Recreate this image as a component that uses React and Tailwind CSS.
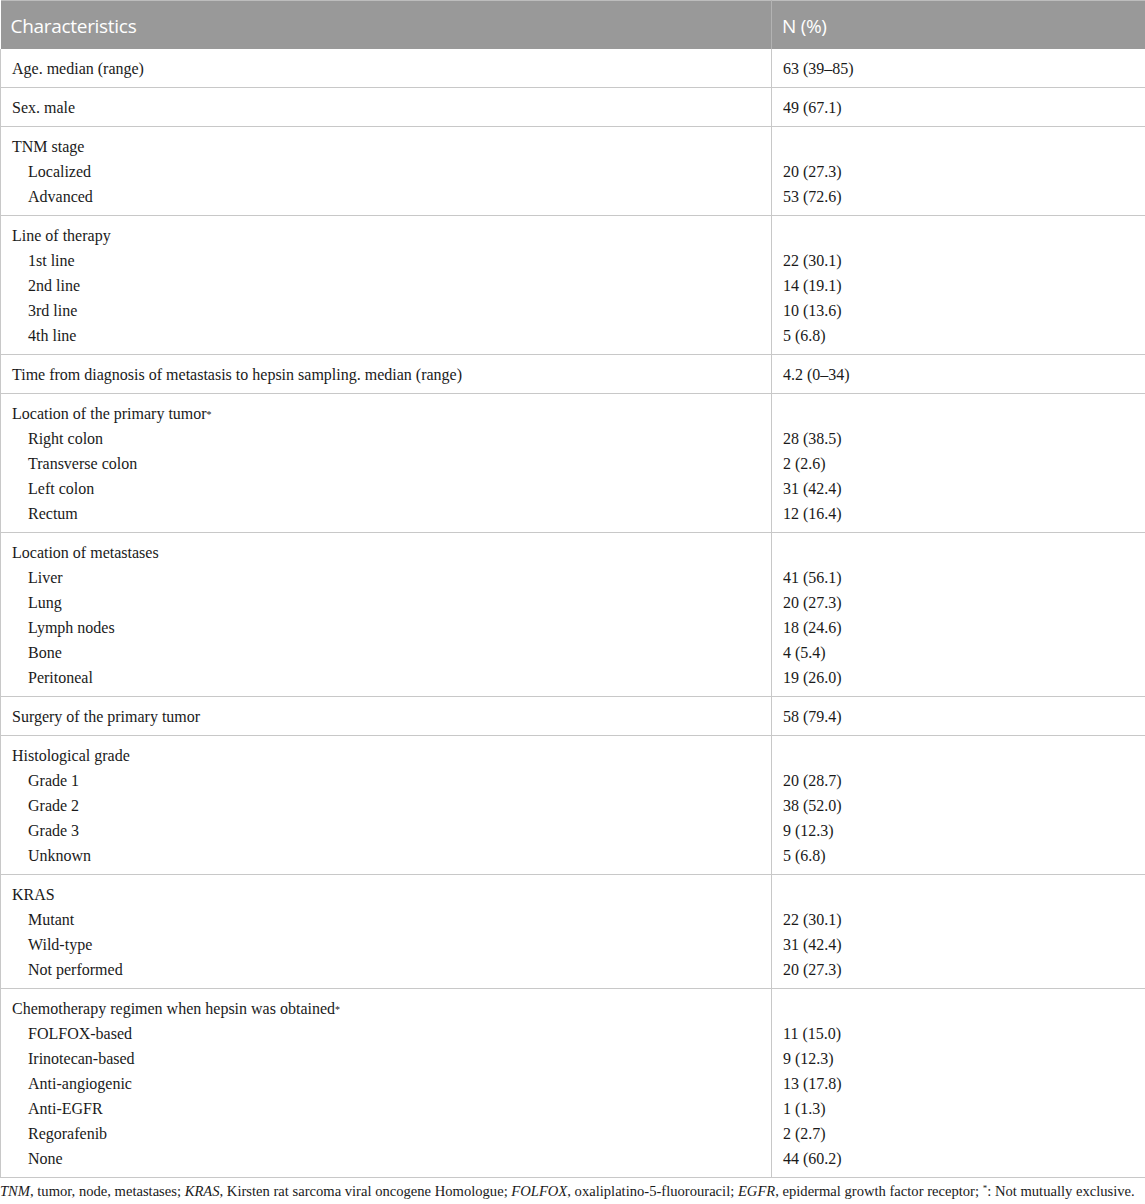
const rows = [
  { title: "Age. median (range)", value: "63 (39–85)" },
  { title: "Sex. male", value: "49 (67.1)" },
  { title: "TNM stage", items: [["Localized", "20 (27.3)"], ["Advanced", "53 (72.6)"]] },
  { title: "Line of therapy", items: [["1st line", "22 (30.1)"], ["2nd line", "14 (19.1)"], ["3rd line", "10 (13.6)"], ["4th line", "5 (6.8)"]] },
  { title: "Time from diagnosis of metastasis to hepsin sampling. median (range)", value: "4.2 (0–34)" },
  { title: "Location of the primary tumor*", items: [["Right colon", "28 (38.5)"], ["Transverse colon", "2 (2.6)"], ["Left colon", "31 (42.4)"], ["Rectum", "12 (16.4)"]] },
  { title: "Location of metastases", items: [["Liver", "41 (56.1)"], ["Lung", "20 (27.3)"], ["Lymph nodes", "18 (24.6)"], ["Bone", "4 (5.4)"], ["Peritoneal", "19 (26.0)"]] },
  { title: "Surgery of the primary tumor", value: "58 (79.4)" },
  { title: "Histological grade", items: [["Grade 1", "20 (28.7)"], ["Grade 2", "38 (52.0)"], ["Grade 3", "9 (12.3)"], ["Unknown", "5 (6.8)"]] },
  { title: "KRAS", items: [["Mutant", "22 (30.1)"], ["Wild-type", "31 (42.4)"], ["Not performed", "20 (27.3)"]] },
  { title: "Chemotherapy regimen when hepsin was obtained*", items: [["FOLFOX-based", "11 (15.0)"], ["Irinotecan-based", "9 (12.3)"], ["Anti-angiogenic", "13 (17.8)"], ["Anti-EGFR", "1 (1.3)"], ["Regorafenib", "2 (2.7)"], ["None", "44 (60.2)"]] },
];

function Title({ text }) {
  if (text.endsWith("*")) {
    return (
      <span>
        {text.slice(0, -1)}
        <sup className="text-[10px] relative top-[-1px]">*</sup>
      </span>
    );
  }
  return <span>{text}</span>;
}

export default function App() {
  return (
    <div className="w-[1145px] bg-white text-[#1a1a1a]" style={{ fontFamily: '"Liberation Serif", "Times New Roman", serif' }}>
      <table className="w-[1145px] border-collapse table-fixed">
        <colgroup>
          <col className="w-[771px]" />
          <col className="w-[374px]" />
        </colgroup>
        <thead>
          <tr className="bg-[#999999] h-[48px] border-t border-[#bdbdbd]">
            <th className="text-left font-normal text-white text-[19px] tracking-[-0.3px] pl-[10px] pt-[3px] align-middle border-r border-[#b3b3b3]" style={{ fontFamily: '"Open Sans", "Noto Sans", sans-serif' }}>Characteristics</th>
            <th className="text-left font-normal text-white text-[19px] tracking-[-0.3px] pl-[10px] pt-[3px] align-middle" style={{ fontFamily: '"Open Sans", "Noto Sans", sans-serif' }}>N (%)</th>
          </tr>
        </thead>
        <tbody className="text-[16px] leading-[25px]">
          {rows.map((r, i) => (
            <tr key={i} className="border-b border-[#c8c8c8]">
              <td className="pl-[11px] pt-[7px] pb-[6px] border-l border-r border-[#c8c8c8] align-top">
                <div><Title text={r.title} /></div>
                {r.items && r.items.map((it, j) => (
                  <div key={j} className="pl-[16px]">{it[0]}</div>
                ))}
              </td>
              <td className="pl-[11px] pt-[7px] pb-[6px] border-r border-[#c8c8c8] align-top">
                {r.items ? (
                  <>
                    <div>&nbsp;</div>
                    {r.items.map((it, j) => (
                      <div key={j}>{it[1]}</div>
                    ))}
                  </>
                ) : (
                  <div>{r.value}</div>
                )}
              </td>
            </tr>
          ))}
        </tbody>
      </table>
      <p className="text-[14.6px] leading-[20px] pt-[3px] whitespace-nowrap">
        <i>TNM</i>, tumor, node, metastases; <i>KRAS</i>, Kirsten rat sarcoma viral oncogene Homologue; <i>FOLFOX</i>, oxaliplatino-5-fluorouracil; <i>EGFR</i>, epidermal growth factor receptor; <sup className="text-[9px]">*</sup>: Not mutually exclusive.
      </p>
    </div>
  );
}
